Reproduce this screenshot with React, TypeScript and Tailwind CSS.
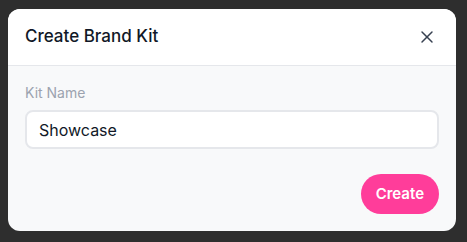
import { X } from "lucide-react";
import React from "react";

export default function App() {
  return (
    <div
      className="min-h-screen w-full bg-[#2e2e2e] pl-2 pt-[9px]"
      style={{ fontFamily: "Inter, 'Noto Sans', sans-serif" }}
    >
      <div className="w-[448px] overflow-hidden rounded-xl bg-[#f8f9fa]">
        <div className="flex h-[57px] items-center justify-between border-b border-[#e5e7eb] bg-white pl-[17px] pr-[19px]">
          <h2 className="text-[17px] font-medium text-[#111827]">
            Create Brand Kit
          </h2>
          <button type="button" className="text-[#374151]">
            <X className="h-5 w-5" strokeWidth={1.75} />
          </button>
        </div>
        <div className="px-[17px] pb-[17px] pt-[17px]">
          <label className="block text-sm text-[#9ca3af]">Kit Name</label>
          <input
            value="Showcase"
            readOnly
            className="mt-[7px] block h-[39px] w-full rounded-lg border-2 border-[#e5e7eb] bg-white px-3 text-base text-[#111827] outline-none"
          />
          <div className="mt-[25px] flex justify-end">
            <button
              type="button"
              className="h-[40px] rounded-full bg-[#ff3d9a] px-[15px] text-[15px] font-semibold text-white"
            >
              Create
            </button>
          </div>
        </div>
      </div>
    </div>
  );
}
